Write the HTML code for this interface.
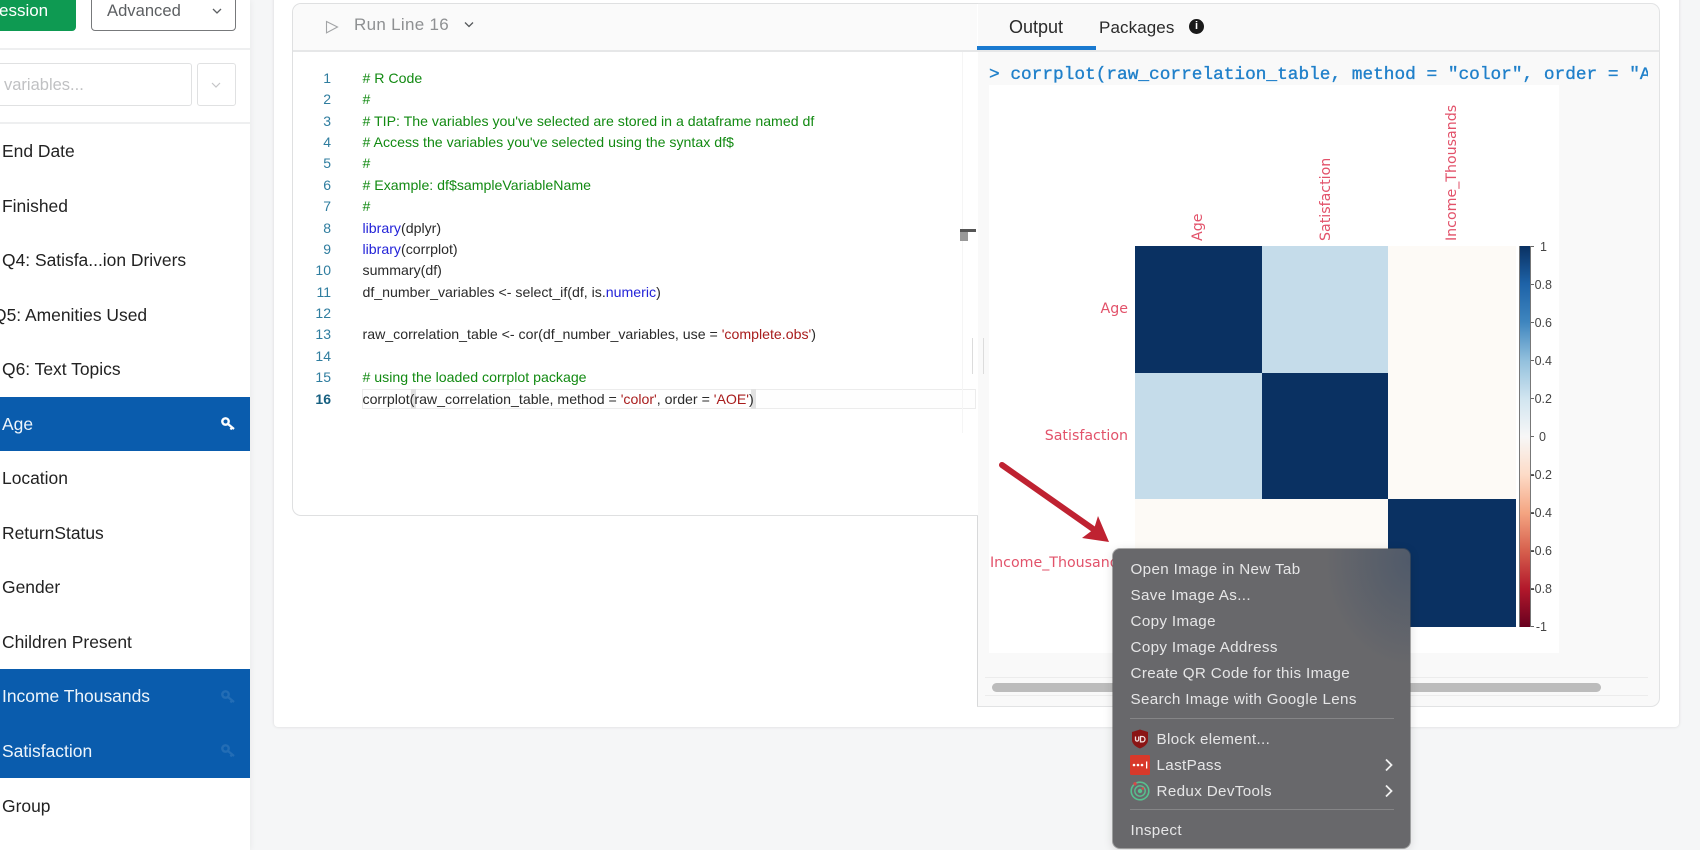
<!DOCTYPE html>
<html lang="en">
<head>
<meta charset="utf-8">
<title>Code editor</title>
<style>
html,body{margin:0;padding:0;width:1700px;height:850px;overflow:hidden;background:#f5f6f7;font-family:"Liberation Sans",sans-serif;}
body{filter:blur(.25px);}
*{box-sizing:border-box;}
.a{position:absolute;}
.t{position:absolute;white-space:nowrap;}
#side{left:0;top:0;width:250px;height:850px;background:#fff;box-shadow:1px 0 6px rgba(0,0,0,.05);overflow:hidden;}
.row{position:absolute;left:0;width:250px;height:54.5px;line-height:55px;font-size:17.45px;color:#222;padding-left:2px;white-space:nowrap;}
.sel{background:#0a5cad;color:#eef5fb;}
.ln{position:absolute;right:0;width:40px;text-align:right;font-size:14px;color:#2f7d9f;height:21.37px;line-height:21.37px;}
.cd{position:absolute;left:0;font-size:14.15px;color:#2a2a2a;height:21.37px;line-height:21.37px;white-space:pre;}
.c{color:#128a12;}.k{color:#2323d8;}.s{color:#a81c1c;}
.tick{position:absolute;font-size:12.5px;color:#454545;line-height:14px;width:40px;left:1512px;text-align:right;}
.tm{position:absolute;left:1531px;width:3px;height:1px;background:#666;}
.mi{position:absolute;left:17.5px;font-size:15.2px;letter-spacing:.35px;color:#e6e6e7;white-space:nowrap;line-height:20px;}
</style>
</head>
<body>

<!-- outer card -->
<div class="a" style="left:274px;top:-10px;width:1405px;height:737px;background:#fff;border-radius:4px;box-shadow:0 0 3px rgba(0,0,0,.12);"></div>

<!-- sidebar -->
<div class="a" id="side">
  <div class="a" style="left:-40px;top:-10px;width:116px;height:41px;background:#0e9a52;border-radius:4px;"></div>
  <div class="t" style="left:-1px;top:1px;font-size:17px;line-height:20px;color:#fff;">ession</div>
  <div class="a" style="left:91px;top:-10px;width:145px;height:41px;border:1.5px solid #77797b;border-radius:4px;background:#fff;"></div>
  <div class="t" style="left:107px;top:1px;font-size:16.6px;line-height:20px;color:#5c5f62;">Advanced</div>
  <svg class="a" style="left:211px;top:6px;" width="12" height="10" viewBox="0 0 12 10"><path d="M2 3l4 4 4-4" fill="none" stroke="#5c5f62" stroke-width="1.3"/></svg>
  <div class="a" style="left:0;top:48px;width:250px;height:2px;background:#eeeff0;"></div>
  <div class="a" style="left:-10px;top:63px;width:202px;height:43px;border:1.5px solid #e0e1e2;border-radius:3px;"></div>
  <div class="t" style="left:4px;top:75px;font-size:16.5px;line-height:20px;color:#c0c1c3;">variables...</div>
  <div class="a" style="left:197px;top:63px;width:39px;height:43px;border:1.5px solid #e0e1e2;border-radius:3px;"></div>
  <svg class="a" style="left:210px;top:80px;" width="12" height="10" viewBox="0 0 12 10"><path d="M2 3l4 4 4-4" fill="none" stroke="#c4c5c7" stroke-width="1.2"/></svg>
  <div class="a" style="left:0;top:122px;width:250px;height:2px;background:#eeeff0;"></div>

  <div class="row" style="top:124px;">End Date</div>
  <div class="row" style="top:178.5px;line-height:54px;">Finished</div>
  <div class="row" style="top:233px;">Q4: Satisfa...ion Drivers</div>
  <div class="row" style="top:287.5px;padding-left:0;text-indent:-7px;">Q5: Amenities Used</div>
  <div class="row" style="top:342px;">Q6: Text Topics</div>
  <div class="row sel" style="top:396.5px;">Age</div>
  <div class="row" style="top:451px;">Location</div>
  <div class="row" style="top:505.5px;">ReturnStatus</div>
  <div class="row" style="top:560px;">Gender</div>
  <div class="row" style="top:614.5px;">Children Present</div>
  <div class="row sel" style="top:669px;">Income Thousands</div>
  <div class="row sel" style="top:723.5px;">Satisfaction</div>
  <div class="row" style="top:778px;line-height:56px;">Group</div>

  <svg class="a" style="left:220px;top:416px;" width="16" height="16" viewBox="0 0 16 16"><circle cx="5.5" cy="5.5" r="3.2" fill="none" stroke="#fff" stroke-width="2.4"/><path d="M8 8l6 5M12 11.5l-1.5 2" stroke="#fff" stroke-width="2.2" fill="none"/></svg>
  <svg class="a" style="left:220px;top:689px;opacity:.1;" width="16" height="16" viewBox="0 0 16 16"><circle cx="5.5" cy="5.5" r="3.2" fill="none" stroke="#fff" stroke-width="2.4"/><path d="M8 8l6 5M12 11.5l-1.5 2" stroke="#fff" stroke-width="2.2" fill="none"/></svg>
  <svg class="a" style="left:220px;top:743px;opacity:.1;" width="16" height="16" viewBox="0 0 16 16"><circle cx="5.5" cy="5.5" r="3.2" fill="none" stroke="#fff" stroke-width="2.4"/><path d="M8 8l6 5M12 11.5l-1.5 2" stroke="#fff" stroke-width="2.2" fill="none"/></svg>
</div>

<!-- right pane base -->
<div class="a" style="left:977px;top:3px;width:683px;height:704px;background:#f9f9f9;border:1px solid #e2e3e4;border-left:1px solid #d8d9da;border-radius:0 9px 9px 0;"></div>

<!-- left editor card -->
<div class="a" style="left:292px;top:3px;width:686px;height:513px;background:#fff;border:1px solid #dfe0e1;border-right:none;border-radius:9px 0 0 9px;"></div>
<div class="a" style="left:293px;top:4px;width:684px;height:46px;background:#fafafa;border-radius:9px 0 0 0;"></div>
<div class="a" style="left:293px;top:50px;width:1366px;height:2px;background:#e6e7e8;"></div>

<!-- toolbar -->
<svg class="a" style="left:325px;top:20px;" width="14" height="14" viewBox="0 0 14 14"><path d="M1.5 1.5L12.5 7 1.5 12.8z" fill="none" stroke="#a2a4a6" stroke-width="1.1"/></svg>
<div class="t" style="left:354px;top:15px;font-size:17px;letter-spacing:.3px;line-height:20px;color:#8e9092;">Run Line 16</div>
<svg class="a" style="left:463px;top:20px;" width="12" height="10" viewBox="0 0 12 10"><path d="M2 2.5l4 4 4-4" fill="none" stroke="#55585b" stroke-width="1.3"/></svg>

<!-- code -->
<div class="a" style="left:291px;top:68px;width:40px;height:345px;">
  <div class="ln" style="top:0">1</div><div class="ln" style="top:21.37px">2</div><div class="ln" style="top:42.74px">3</div><div class="ln" style="top:64.11px">4</div><div class="ln" style="top:85.48px">5</div><div class="ln" style="top:106.85px">6</div><div class="ln" style="top:128.22px">7</div><div class="ln" style="top:149.59px">8</div><div class="ln" style="top:170.96px">9</div><div class="ln" style="top:192.33px">10</div><div class="ln" style="top:213.7px">11</div><div class="ln" style="top:235.07px">12</div><div class="ln" style="top:256.44px">13</div><div class="ln" style="top:277.81px">14</div><div class="ln" style="top:299.18px">15</div><div class="ln" style="top:320.55px;color:#165f80;font-weight:bold;">16</div>
</div>
<div class="a" style="left:362px;top:389px;width:614px;height:20px;border:1px solid #ececec;background:#fefefe;"></div>
<div class="a" style="left:411px;top:389px;width:5px;height:20px;background:#e2e2e2;"></div>
<div class="a" style="left:751px;top:389px;width:5px;height:20px;background:#e2e2e2;"></div>
<div class="a" style="left:362.5px;top:68px;width:600px;height:345px;">
  <div class="cd c" style="top:0"># R Code</div>
  <div class="cd c" style="top:21.37px">#</div>
  <div class="cd c" style="top:42.74px"># TIP: The variables you've selected are stored in a dataframe named df</div>
  <div class="cd c" style="top:64.11px"># Access the variables you've selected using the syntax df$</div>
  <div class="cd c" style="top:85.48px">#</div>
  <div class="cd c" style="top:106.85px"># Example: df$sampleVariableName</div>
  <div class="cd c" style="top:128.22px">#</div>
  <div class="cd" style="top:149.59px"><span class="k">library</span>(dplyr)</div>
  <div class="cd" style="top:170.96px"><span class="k">library</span>(corrplot)</div>
  <div class="cd" style="top:192.33px">summary(df)</div>
  <div class="cd" style="top:213.7px">df_number_variables &lt;- select_if(df, is.<span class="k">numeric</span>)</div>
  <div class="cd" style="top:256.44px">raw_correlation_table &lt;- cor(df_number_variables, use = <span class="s">'complete.obs'</span>)</div>
  <div class="cd c" style="top:299.18px"># using the loaded corrplot package</div>
  <div class="cd" style="top:320.55px">corrplot(raw_correlation_table, method = <span class="s">'color'</span>, order = <span class="s">'AOE'</span>)</div>
</div>

<!-- editor scroll decorations -->
<div class="a" style="left:962px;top:52px;width:1px;height:381px;background:#f5f5f5;"></div>
<div class="a" style="left:960px;top:229px;width:16px;height:3px;background:#555;"></div>
<div class="a" style="left:960px;top:232px;width:8px;height:9px;background:#999;"></div>
<div class="a" style="left:972px;top:338px;width:1px;height:36px;background:#dcdcdc;"></div>
<div class="a" style="left:983px;top:338px;width:1px;height:36px;background:#dcdcdc;"></div>

<!-- tabs -->
<div class="t" style="left:1009px;top:17px;font-size:18px;line-height:20px;color:#2a2a2a;">Output</div>
<div class="t" style="left:1099px;top:18px;font-size:17px;letter-spacing:.1px;line-height:20px;color:#2a2a2a;">Packages</div>
<div class="a" style="left:1189px;top:19px;width:15px;height:15px;border-radius:50%;background:#1a1a1a;color:#fff;font-size:11px;line-height:15px;text-align:center;font-weight:bold;">i</div>
<div class="a" style="left:977px;top:46px;width:119px;height:4px;background:#1a7ad0;"></div>

<!-- console -->
<div class="a" style="left:989px;top:64px;width:659px;height:22px;overflow:hidden;">
  <div class="t" style="left:0;top:1px;font-family:'Liberation Mono',monospace;font-size:17.8px;line-height:20px;color:#2080ca;-webkit-text-stroke:.35px #2080ca;">&gt; corrplot(raw_correlation_table, method = "color", order = "AOE")</div>
</div>

<!-- plot -->
<div class="a" style="left:989px;top:85px;width:570px;height:568px;background:#fff;"></div>
<div class="a" style="left:1135px;top:246px;width:127px;height:127px;background:#0a3162;"></div>
<div class="a" style="left:1262px;top:246px;width:126px;height:127px;background:#c5dcea;"></div>
<div class="a" style="left:1388px;top:246px;width:128px;height:127px;background:#fdfaf6;"></div>
<div class="a" style="left:1135px;top:373px;width:127px;height:126px;background:#c5dcea;"></div>
<div class="a" style="left:1262px;top:373px;width:126px;height:126px;background:#0a3162;"></div>
<div class="a" style="left:1388px;top:373px;width:128px;height:126px;background:#fdfaf6;"></div>
<div class="a" style="left:1135px;top:499px;width:253px;height:128px;background:#fdfaf6;"></div>
<div class="a" style="left:1388px;top:499px;width:128px;height:128px;background:#0a3162;"></div>

<!-- colourbar -->
<div class="a" style="left:1519px;top:246px;width:12px;height:381px;border:1px solid #777;border-top:none;border-bottom:none;background:linear-gradient(to bottom,#0a3162 0%,#1e63a8 10%,#3f86bf 20%,#92c0dd 30%,#d1e5f0 40%,#f7f7f7 50%,#fddbc7 60%,#f4a582 70%,#d6604d 80%,#b2182b 90%,#67001f 100%);"></div>
<div class="tm" style="top:246px"></div><div class="tm" style="top:284px"></div><div class="tm" style="top:322px"></div><div class="tm" style="top:360px"></div><div class="tm" style="top:398px"></div><div class="tm" style="top:436px"></div><div class="tm" style="top:474px"></div><div class="tm" style="top:512px"></div><div class="tm" style="top:550px"></div><div class="tm" style="top:588px"></div><div class="tm" style="top:626px"></div>
<div class="tick" style="top:240px;left:1507px;">1</div>
<div class="tick" style="top:278px;">0.8</div>
<div class="tick" style="top:316px;">0.6</div>
<div class="tick" style="top:354px;">0.4</div>
<div class="tick" style="top:392px;">0.2</div>
<div class="tick" style="top:430px;left:1506px;">0</div>
<div class="tick" style="top:468px;">-0.2</div>
<div class="tick" style="top:506px;">-0.4</div>
<div class="tick" style="top:544px;">-0.6</div>
<div class="tick" style="top:582px;">-0.8</div>
<div class="tick" style="top:620px;left:1507px;">-1</div>

<!-- plot labels -->
<svg class="a" style="left:989px;top:85px;" width="570" height="568">
  <g font-family="DejaVu Sans, sans-serif" font-size="14.2" fill="#e2526a">
    <text transform="translate(213,156) rotate(-90)">Age</text>
    <text transform="translate(341,156) rotate(-90)">Satisfaction</text>
    <text transform="translate(467,156) rotate(-90)">Income_Thousands</text>
    <text x="139" y="228" text-anchor="end">Age</text>
    <text x="139" y="355" text-anchor="end">Satisfaction</text>
    <text x="1" y="482">Income_Thousands</text>
  </g>
</svg>

<!-- scrollbar -->
<div class="a" style="left:985px;top:677px;width:663px;height:1px;background:#ececec;"></div>
<div class="a" style="left:985px;top:695px;width:663px;height:1px;background:#ececec;"></div>
<div class="a" style="left:992px;top:683px;width:609px;height:9px;border-radius:5px;background:#bcbcbc;"></div>

<!-- arrow -->
<svg class="a" style="left:990px;top:455px;" width="130" height="95" viewBox="0 0 130 95">
  <path d="M12 10L106 76" stroke="#bf2231" stroke-width="6" stroke-linecap="round" fill="none"/>
  <path d="M119 87L108 61 104 74 92 83z" fill="#bf2231"/>
</svg>

<!-- context menu -->
<div class="a" style="left:1113px;top:549px;width:297px;height:299px;border-radius:7px;background:radial-gradient(ellipse 85px 105px at 100% 4%,#505a6a 0%,rgba(104,104,107,0) 100%),#68686b;box-shadow:0 0 0 1px rgba(90,90,90,.5),0 2px 10px rgba(0,0,0,.15);">
  <div class="mi" style="top:11px;">Open Image in New Tab</div>
  <div class="mi" style="top:37px;">Save Image As...</div>
  <div class="mi" style="top:63px;">Copy Image</div>
  <div class="mi" style="top:89px;">Copy Image Address</div>
  <div class="mi" style="top:115px;">Create QR Code for this Image</div>
  <div class="mi" style="top:141px;">Search Image with Google Lens</div>
  <div class="a" style="left:17px;top:169px;width:264px;height:1px;background:#858587;"></div>
  <div class="mi" style="top:181px;left:43.5px;">Block element...</div>
  <div class="mi" style="top:207px;left:43.5px;">LastPass</div>
  <div class="mi" style="top:233px;left:43.5px;">Redux DevTools</div>
  <div class="a" style="left:17px;top:260px;width:264px;height:1px;background:#858587;"></div>
  <div class="mi" style="top:272px;">Inspect</div>

  <svg class="a" style="left:18px;top:180px;" width="18" height="20" viewBox="0 0 18 20"><path d="M1 3l8-2.5L17 3v8c0 4-4 7-8 8.5C5 18 1 15 1 11z" fill="#8a1515"/><path d="M4.5 7.5v3a1.6 1.6 0 0 0 3.2 0v-3M9.5 7.5h1.8a2.6 2.6 0 0 1 0 5.4H9.5z" fill="none" stroke="#f2e0e0" stroke-width="1.3"/></svg>
  <svg class="a" style="left:17px;top:206px;" width="20" height="20" viewBox="0 0 20 20"><rect width="20" height="20" rx="1.5" fill="#d8392b"/><circle cx="4" cy="10" r="1.3" fill="#fff"/><circle cx="8" cy="10" r="1.3" fill="#fff"/><circle cx="12" cy="10" r="1.3" fill="#fff"/><rect x="16" y="6.5" width="1.3" height="7" fill="#fff"/></svg>
  <svg class="a" style="left:17px;top:232px;" width="20" height="20" viewBox="0 0 20 20"><circle cx="10" cy="10" r="8.8" fill="none" stroke="#57c08f" stroke-width="1.6"/><circle cx="10" cy="10" r="5.2" fill="none" stroke="#57c08f" stroke-width="1.4"/><circle cx="10" cy="10" r="2.2" fill="#57c08f"/><circle cx="5" cy="2.8" r="1.7" fill="#d64a4a"/><circle cx="12.8" cy="7.5" r="1.3" fill="#d64a4a"/></svg>

  <svg class="a" style="left:271px;top:209px;" width="10" height="14" viewBox="0 0 10 14"><path d="M2 1.5L7.5 7 2 12.5" fill="none" stroke="#f0f0f0" stroke-width="1.8"/></svg>
  <svg class="a" style="left:271px;top:235px;" width="10" height="14" viewBox="0 0 10 14"><path d="M2 1.5L7.5 7 2 12.5" fill="none" stroke="#f0f0f0" stroke-width="1.8"/></svg>
</div>

</body>
</html>
